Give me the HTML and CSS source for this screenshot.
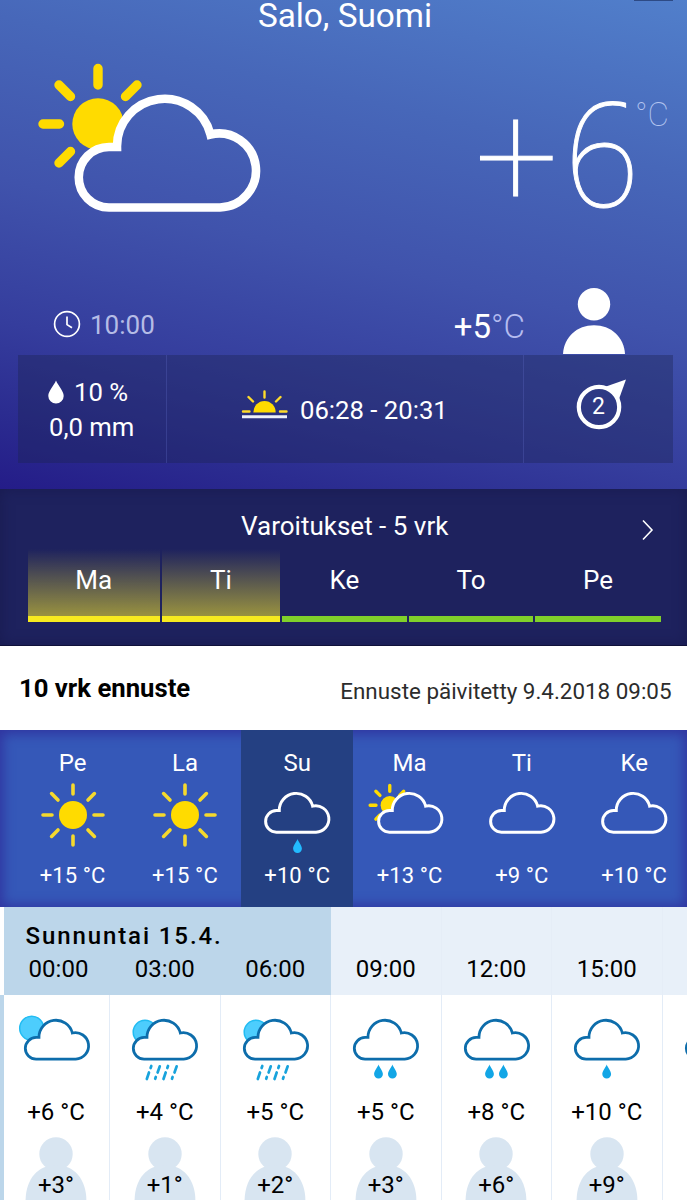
FILE: index.html
```html
<!DOCTYPE html>
<html lang="fi">
<head>
<meta charset="utf-8">
<title>Sää – Salo</title>
<link rel="stylesheet" href="styles.css">
</head>
<body>
<svg class="defs" width="0" height="0">
  <defs>
    <path id="cloud" d="M117 147 A47.5 47.5 0 0 1 210.5 134.5 A37 37 0 1 1 220 207.5 H109 A30.2 30.2 0 0 1 109 147 Z"/>
    <mask id="behind" maskUnits="userSpaceOnUse" x="0" y="0" width="300" height="300">
      <rect width="300" height="300" fill="#fff"/>
      <use href="#cloud" fill="#000"/>
    </mask>
    <g id="halfsun">
      <circle cx="98" cy="124" r="25.7"/>
      <path class="rays" d="M98 68.5V85M43 124H59.5M59 85L70.5 96.5M137 85L125.5 96.5M59 163L70.5 151.5"/>
    </g>
    <symbol id="sun" viewBox="-34 -34 68 68">
      <circle r="14"/>
      <path class="sunrays" d="M0-30V-21M0 30V21M-30 0H-21M30 0H21M-21.4-21.4L-15-15M21.4-21.4L15-15M-21.4 21.4L-15 15M21.4 21.4L15 15"/>
    </symbol>
    <path id="drop" d="M0-7C1-4 4.4-.5 4.4 2.6A4.4 4.4 0 0 1-4.4 2.6C-4.4-.5-1-4 0-7Z"/>
    <path id="sleet" d="M152.3 1067L151.6 1069M150 1073.5L147.8 1080M160.8 1067.3L158.6 1073.5M156.8 1078L156.2 1079.8M169 1067L168.3 1069M166.7 1073.5L164.5 1080M177.7 1067.3L175.5 1073.5M173.6 1078L173 1079.8" transform="translate(-132 -1016)"/>
    <symbol id="person" viewBox="0 0 62 66">
      <circle cx="31" cy="16.3" r="16.2"/><path d="M0 66C1 49 14 37.300 31 37.300S61 49 62 66Z"/>
    </symbol>
    <symbol id="body" viewBox="0 0 62 64">
      <circle cx="31" cy="17" r="16.700"/><path d="M.6 64C.6 42 13 28 31 28S61.400 42 61.400 64Z"/>
    </symbol>
  </defs>
</svg>

<main class="app">
  <section class="hero">
    <div class="statusbit"></div>
    <h1 class="place">Salo, Suomi</h1>
    <div class="current">
      <svg class="current-icon" viewBox="38 64 226 150" width="226" height="150">
        <g mask="url(#behind)"><use href="#halfsun" class="yellow"/></g>
        <use href="#cloud" class="line-white big"/>
      </svg>
      <div class="current-temp"><span class="deg">+<span class="digit">6</span></span><span class="unit">°C</span></div>
    </div>
    <div class="now">
      <svg class="clock" width="28" height="28" viewBox="-14 -14 28 28"><circle r="12.400"/><path d="M0-7.500V.6L5 3.800"/></svg>
      <span class="now-time">10:00</span>
      <span class="feels">+5<i>°C</i></span>
      <svg class="now-person" width="62" height="66"><use href="#person"/></svg>
    </div>
    <div class="metrics">
      <div class="metric rain">
        <div class="rain-row"><svg width="16" height="24" viewBox="-8 -12 16 24"><path d="M0-11.500C2-6.500 7.700-1 7.700 4A7.700 7.400 0 0 1-7.700 4C-7.700-1-2-6.500 0-11.500Z"/></svg><span>10 %</span></div>
        <div class="rain-row amount">0,0 mm</div>
      </div>
      <div class="metric daylight">
        <svg width="46" height="30" viewBox="0 0 46 30">
          <path class="yellow" d="M11.300 22.500A11.200 11.500 0 0 1 33.700 22.500Z"/>
          <path class="sr" d="M22.500 1.500V7.500M6.500 7L11 11.500M38.500 7L34 11.500M1 21.500H7.500M38 21.500H44.500"/>
          <path class="horizon" d="M0 26.700H45"/>
        </svg>
        <span>06:28 - 20:31</span>
      </div>
      <div class="metric wind">
        <svg width="56" height="56" viewBox="-28 -28 56 56">
          <path class="tip" d="M7-20.500L27-27.500L20-8Z"/><circle r="20.200"/>
        </svg>
        <span class="wind-speed">2</span>
      </div>
    </div>
  </section>

  <section class="warnings">
    <header><h2>Varoitukset - 5 vrk</h2><svg class="chev" width="12" height="22" viewBox="0 0 12 22"><path d="M1 1.500L10 11L1 20.500"/></svg></header>
    <div class="tabs">
      <div class="tab warn">Ma</div><div class="tab warn">Ti</div><div class="tab">Ke</div><div class="tab">To</div><div class="tab">Pe</div>
    </div>
  </section>

  <section class="heading"><h2>10 vrk ennuste</h2><p>Ennuste päivitetty 9.4.2018 09:05</p></section>

  <section class="days">
    <div class="day"><b>Pe</b><svg width="68" height="68"><use href="#sun" class="yellow"/></svg><span>+15 °C</span></div>
    <div class="day"><b>La</b><svg width="68" height="68"><use href="#sun" class="yellow"/></svg><span>+15 °C</span></div>
    <div class="day active"><b>Su</b><svg width="68" height="68"><g transform="translate(-25.500 -22.900) scale(.357)"><use href="#cloud" class="line-white"/></g><use href="#drop" x="34.500" y="65" class="blue"/></svg><span>+10 °C</span></div>
    <div class="day"><b>Ma</b><svg width="84" height="68"><g transform="translate(-17.500 -22.900) scale(.357)"><g mask="url(#behind)"><use href="#halfsun" class="yellow" transform="translate(12 8)"/></g><use href="#cloud" class="line-white"/></g></svg><span>+13 °C</span></div>
    <div class="day"><b>Ti</b><svg width="68" height="68"><g transform="translate(-25.500 -22.900) scale(.357)"><use href="#cloud" class="line-white"/></g></svg><span>+9 °C</span></div>
    <div class="day"><b>Ke</b><svg width="68" height="68"><g transform="translate(-25.500 -22.900) scale(.357)"><use href="#cloud" class="line-white"/></g></svg><span>+10 °C</span></div>
  </section>

  <section class="hours">
    <div class="hour first night"><div class="hh"><strong>Sunnuntai 15.4.</strong><time>00:00</time></div>
      <div class="hb"><svg class="wx" width="76" height="70" viewBox="-5 -3 76 70"><circle class="moon" cx="8.700" cy="13.200" r="12"/><g transform="translate(-25.800 -30) scale(.357)"><use href="#cloud" class="line-blue"/></g></svg><span class="t">+6 °C</span><div class="fl"><svg width="62" height="64"><use href="#body"/></svg><span>+3°</span></div></div></div>
    <div class="hour night"><div class="hh"><time>03:00</time></div>
      <div class="hb"><svg class="wx" width="76" height="70" viewBox="-5 -3 76 70"><circle class="moon" cx="14" cy="17" r="11.800"/><g transform="translate(-25.800 -30) scale(.357)"><use href="#cloud" class="line-blue"/></g><use href="#sleet" class="sleet"/></svg><span class="t">+4 °C</span><div class="fl"><svg width="62" height="64"><use href="#body"/></svg><span>+1°</span></div></div></div>
    <div class="hour night"><div class="hh"><time>06:00</time></div>
      <div class="hb"><svg class="wx" width="76" height="70" viewBox="-5 -3 76 70"><circle class="moon" cx="14" cy="17" r="11.800"/><g transform="translate(-25.800 -30) scale(.357)"><use href="#cloud" class="line-blue"/></g><use href="#sleet" class="sleet"/></svg><span class="t">+5 °C</span><div class="fl"><svg width="62" height="64"><use href="#body"/></svg><span>+2°</span></div></div></div>
    <div class="hour"><div class="hh"><time>09:00</time></div>
      <div class="hb"><svg class="wx" width="76" height="70" viewBox="-5 -3 76 70"><g transform="translate(-25.800 -30) scale(.357)"><use href="#cloud" class="line-blue"/></g><use href="#drop" x="26.500" y="56.500" class="rainblue"/><use href="#drop" x="40.400" y="56.500" class="rainblue"/></svg><span class="t">+5 °C</span><div class="fl"><svg width="62" height="64"><use href="#body"/></svg><span>+3°</span></div></div></div>
    <div class="hour"><div class="hh"><time>12:00</time></div>
      <div class="hb"><svg class="wx" width="76" height="70" viewBox="-5 -3 76 70"><g transform="translate(-25.800 -30) scale(.357)"><use href="#cloud" class="line-blue"/></g><use href="#drop" x="26.500" y="56.500" class="rainblue"/><use href="#drop" x="40.400" y="56.500" class="rainblue"/></svg><span class="t">+8 °C</span><div class="fl"><svg width="62" height="64"><use href="#body"/></svg><span>+6°</span></div></div></div>
    <div class="hour"><div class="hh"><time>15:00</time></div>
      <div class="hb"><svg class="wx" width="76" height="70" viewBox="-5 -3 76 70"><g transform="translate(-25.800 -30) scale(.357)"><use href="#cloud" class="line-blue"/></g><use href="#drop" x="33.700" y="56.500" class="rainblue"/></svg><span class="t">+10 °C</span><div class="fl"><svg width="62" height="64"><use href="#body"/></svg><span>+9°</span></div></div></div>
    <div class="hour"><div class="hh"></div>
      <div class="hb"><svg class="wx" width="76" height="70" viewBox="-5 -3 76 70"><g transform="translate(-25.800 -30) scale(.357)"><use href="#cloud" class="line-blue"/></g></svg></div></div>
  </section>
</main>
</body>
</html>
```
FILE: styles.css
```css
* { box-sizing: border-box; }
body { margin: 0; background: #fff; font-family: Roboto, "Liberation Sans", sans-serif; color: #fff; }
h1, h2, p { margin: 0; font-weight: 400; }
svg { display: block; flex: none; overflow: visible; }
.defs { position: absolute; }
.app { width: 687px; height: 1200px; overflow: hidden; }

.yellow { fill: #ffdb00; stroke: none; }
.rays { stroke: #ffdb00; stroke-width: 9.400; stroke-linecap: round; }
.sunrays { stroke: #f5d92d; stroke-width: 3.600; stroke-linecap: round; }
.line-white { fill: none; stroke: #fff; stroke-width: 8.300; }
.line-white.big { stroke-width: 8.600; }
.line-blue { fill: #fff; stroke: #0d6dab; stroke-width: 7.800; }
.moon { fill: #4dcdfd; stroke: #22bcf2; stroke-width: 1.500; }
.blue { fill: #22bbff; }
.rainblue { fill: #12a6e6; }
.sleet { fill: none; stroke: #18a3dc; stroke-width: 2.700; stroke-linecap: round; }

.hero { position: relative; height: 489px; background: linear-gradient(193deg, #517fcb 0%, #4767b9 27%, #4053ac 52%, #353d9d 74%, #2b2c90 88%, #241c88 100%); }
.statusbit { position: absolute; right: 14px; top: 0; width: 39px; height: 1px; background: #2d4a85; }
.place { height: 31px; line-height: 31px; font-size: 33.300px; text-align: center; padding-left: 3px; }
.current { height: 257px; display: flex; justify-content: space-between; padding: 33px 18px 0 38px; }
.current-temp { display: flex; align-items: flex-start; font-weight: 100; }
.deg { font-size: 147px; line-height: 180px; margin: -3px -5px 0 0; -webkit-text-stroke: 1px #fff; }
.digit { display: inline-block; font-family: "Noto Sans", Roboto, sans-serif; font-size: .98em; line-height: 180px; transform: scaleX(.92); transform-origin: 92% 50%; }
.unit { font-size: 33px; line-height: 40px; margin-top: 31px; color: #b4c5f0; }

.now { height: 66.500px; display: flex; align-items: center; padding: 0 62px 0 53px; }
.clock { fill: none; stroke: #fff; stroke-width: 1.700; margin-top: 5px; }
.now-time { margin: 8px 0 0 9px; font-size: 26px; color: #b5bce6; }
.feels { margin: 10px 38px 0 auto; font-size: 33px; }
.feels i { font-style: normal; font-weight: 300; color: #b5bcf0; }
.now-person { fill: #fff; margin-top: 0; }

.metrics { height: 108.500px; margin: 0 14.500px 0 18px; display: flex; background: rgba(28, 34, 80, .37); font-size: 25.700px; }
.metric { display: flex; }
.rain { flex-direction: column; width: 149px; padding: 20px 0 0 30px; border-right: 1px solid rgba(90, 100, 190, .35); }
.rain-row { display: flex; align-items: center; height: 35px; }
.rain-row svg { fill: #fff; }
.rain-row span { margin-left: 10px; }
.rain .amount { padding-left: 1px; }
.daylight { width: 357px; align-items: center; padding: 2px 0 0 75px; border-right: 1px solid rgba(90, 100, 190, .35); }
.daylight svg { margin-top: -9px; }
.daylight span { margin-left: 12px; }
.sr { fill: none; stroke: #ffdb2a; stroke-width: 2.400; stroke-linecap: round; }
.horizon { stroke: #eef0fa; stroke-width: 3; }
.wind { position: relative; padding: 24px 0 0 46.500px; }
.wind circle { fill: none; stroke: #fff; stroke-width: 4.200; }
.tip { fill: #fff; }
.wind-speed { position: absolute; left: 46.500px; top: 24.500px; width: 56px; line-height: 56px; text-align: center; font-size: 23px; }

.warnings { height: 156.500px; padding: 19px 25px 0 27.500px; background: #1e225e; box-shadow: inset 0 0 14px #191b50; border-bottom: 1px solid #10113a; }
.warnings header { display: flex; justify-content: center; align-items: center; height: 35px; position: relative; }
.warnings h2 { font-size: 26px; line-height: 32px; }
.chev { position: absolute; right: 8px; top: 11px; fill: none; stroke: #fff; stroke-width: 1.600; }
.tabs { margin-top: 6px; display: grid; grid-template-columns: 132.500px 118px 125px 124px 126px; column-gap: 2px; }
.tab { height: 73px; padding-top: 14px; font-size: 26px; line-height: 34px; text-align: center; border-bottom: 6px solid #80d02a; }
.warn { border-color: #f7ea1f; background: linear-gradient(rgba(168, 158, 50, 0), #99923f); background-clip: padding-box; }

.heading { height: 84.500px; background: #fff; color: #000; display: flex; justify-content: space-between; padding: 0 15.500px 0 19px; }
.heading h2 { font-weight: 700; font-size: 25.700px; line-height: 85px; }
.heading p { font-size: 22.400px; line-height: 91px; color: #2c2c2c; }

.days { height: 177px; padding-left: 16.500px; display: flex; background: #3558b8; box-shadow: inset 0 1px 12px 3px #3035a0; overflow: hidden; }
.day { flex: 0 0 112.300px; display: flex; flex-direction: column; align-items: center; padding-top: 17px; }
.day b { font-weight: 400; font-size: 24px; line-height: 32px; height: 32px; }
.day svg { margin-top: 2px; }
.day span { margin-top: 12px; font-size: 22px; line-height: 30px; letter-spacing: .1px; }
.active { background: #244082; }

.hours { display: flex; height: 293px; color: #000; font-size: 24px; }
.hour { flex: 0 0 110.500px; }
.hour.first { flex-basis: 110px; }
.first .hh { margin-left: 4px; }
.first .hb { border-left: 4px solid #bcd6ea; }
.hh { position: relative; height: 88px; background: #e8f0f9; text-align: center; padding-top: 46px; line-height: 32px; border-right: 1px solid #e5edf7; }
.night .hh { background: #bcd6ea; border-color: #bcd6ea; }
.hh time { display: block; }
.first time { padding-left: 4px; }
.hh strong { position: absolute; z-index: 1; left: 21.500px; top: 13px; white-space: nowrap; font-weight: 500; letter-spacing: 1.900px; }
.hb { height: 205px; border-right: 1px solid #e3ecf7; display: flex; flex-direction: column; align-items: center; }
.first .hb { padding-right: 1px; }
.wx { margin: 17px 1px 0 0; }
.t { margin-top: 14px; line-height: 32px; }
.fl { position: relative; margin-top: 9px; width: 62px; height: 64px; }
.fl svg { fill: #d8e5f1; }
.fl span { position: absolute; left: 0; right: 0; top: 32px; line-height: 32px; text-align: center; }
```
